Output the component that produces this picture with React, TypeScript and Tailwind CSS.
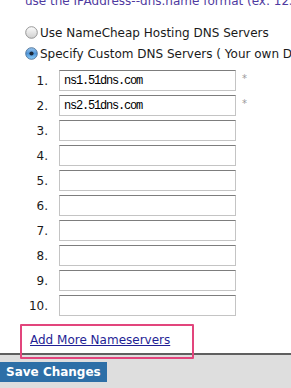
import React from "react";

const servers = [
  "ns1.51dns.com",
  "ns2.51dns.com",
  "",
  "",
  "",
  "",
  "",
  "",
  "",
  "",
];

const Radio: React.FC<{ checked?: boolean }> = ({ checked }) => (
  <svg width="13" height="13" viewBox="0 0 13 13" className="shrink-0">
    <defs>
      <linearGradient id="off" x1="0" y1="0" x2="0" y2="1">
        <stop offset="0" stopColor="#fdfdfd" />
        <stop offset="1" stopColor="#cfcfcf" />
      </linearGradient>
      <linearGradient id="on" x1="0" y1="0" x2="0" y2="1">
        <stop offset="0" stopColor="#9cc8f0" />
        <stop offset="0.5" stopColor="#4f95d8" />
        <stop offset="1" stopColor="#8fd0fb" />
      </linearGradient>
    </defs>
    <circle
      cx="6.5"
      cy="6.5"
      r="5.8"
      fill={checked ? "url(#on)" : "url(#off)"}
      stroke={checked ? "#4a6f95" : "#8c8c8c"}
      strokeWidth="0.9"
    />
    {checked && <circle cx="6.5" cy="6.5" r="2.1" fill="#1c2a3a" />}
  </svg>
);

export default function App() {
  return (
    <div className="relative w-[291px] h-[388px] overflow-hidden bg-white flex flex-col font-['DejaVu_Sans',Verdana,sans-serif] text-[12px] text-[#1a1a1a]">
      <p className="-mt-[7px] h-[16px] pl-[25px] leading-[16px] whitespace-nowrap text-[#4f3aa0]">
        use the IPAddress--dns.name format (ex: 123.123.123.123--ns1.domain.com)
      </p>

      <div className="mt-[13px] pl-[25px] flex flex-col">
        <label className="flex items-center gap-[2px] h-[21px] whitespace-nowrap">
          <Radio />
          <span>Use NameCheap Hosting DNS Servers</span>
        </label>
        <label className="flex items-center gap-[2px] h-[21px] whitespace-nowrap">
          <Radio checked />
          <span>Specify Custom DNS Servers ( Your own DNS Servers )</span>
        </label>
      </div>

      <ol className="mt-[6px] flex flex-col gap-[4px]">
        {servers.map((s, i) => (
          <li key={i} className="flex items-center h-[21px]">
            <span className="w-[49px] text-right pr-[1px]">{i + 1}.</span>
            <input
              readOnly
              value={s}
              className="ml-[10px] w-[177px] h-[21px] px-[4px] border border-[#c4c4c4] border-t-[#7d7d7d] bg-white outline-none font-['Liberation_Mono',monospace] text-[12px] tracking-[-1.2px] text-black"
            />
            {i < 2 && (
              <span className="self-start mt-[4px] ml-[6px] text-[10px] text-[#9a9a9a] leading-none">
                *
              </span>
            )}
          </li>
        ))}
      </ol>

      <div className="mt-[16px] pl-[30px] h-[21px] leading-[16px]">
        <a href="#" className="text-[#1f1f95] underline">
          Add More Nameservers
        </a>
      </div>

      <div className="flex-1 border-t-2 border-[#5f5f5f] bg-[#dedede] pt-[7px]">
        <button className="h-[20px] px-[6px] bg-[#2d6fa7] text-white font-bold leading-[20px]">
          Save Changes
        </button>
      </div>

      <div className="absolute left-[20px] top-[324px] w-[174px] h-[35px] border-2 border-[#e2457c] rounded-[1px] pointer-events-none" />
    </div>
  );
}
